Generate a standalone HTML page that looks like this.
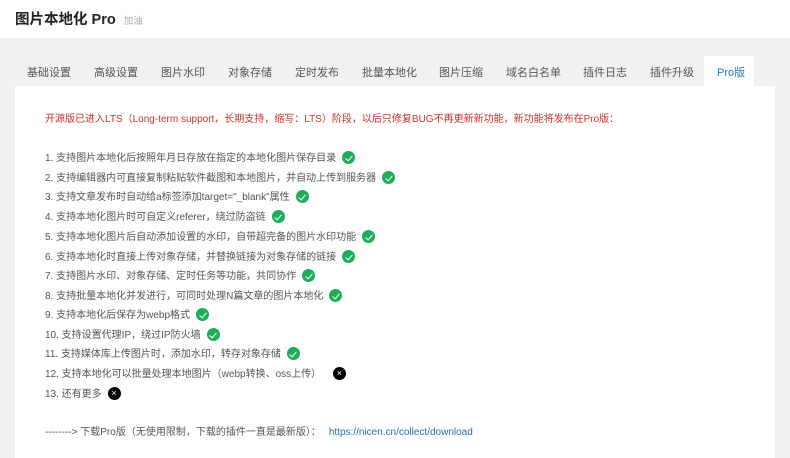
<!DOCTYPE html><html><head><meta charset="utf-8"><style>
body{margin:0;width:790px;height:458px;background:#f1f1f1;font-family:"Liberation Sans","Noto Sans CJK SC",sans-serif;overflow:hidden;position:relative}
.hd{position:absolute;left:0;top:0;width:790px;height:38px;background:#fff}
.t{position:absolute;left:15px;top:8px;font-size:14.5px;font-weight:bold;color:#222}
.t span{font-size:9.5px;font-weight:normal;color:#aaa;margin-left:8px}
.tab{position:absolute;top:64px;font-size:11px;color:#555;white-space:nowrap}
.act{position:absolute;left:704px;top:56px;width:50px;height:30px;background:#fff}
.pn{position:absolute;left:15px;top:86px;width:760px;height:372px;background:#fff}
.l{position:absolute;left:45px;font-size:10px;color:#555;white-space:nowrap;line-height:14px}
.ok,.no{display:inline-block;width:13px;height:13px;border-radius:50%;vertical-align:-3px;margin-left:6px;position:relative}
.ok{background:#1fad5c}.no{background:#000}
.ok:after{content:"";position:absolute;left:4.5px;top:2.5px;width:3px;height:6px;border:solid #fff;border-width:0 1.5px 1.5px 0;transform:rotate(40deg)}
.no:after{content:"×";position:absolute;left:3.5px;top:-1px;color:#fff;font-size:9px}
</style></head><body>
<div class="hd"><div class="t">图片本地化 Pro<span>加油</span></div></div>
<div class="act"></div>
<div class="tab" style="left:27px">基础设置</div>
<div class="tab" style="left:94px">高级设置</div>
<div class="tab" style="left:161px">图片水印</div>
<div class="tab" style="left:228px">对象存储</div>
<div class="tab" style="left:295px">定时发布</div>
<div class="tab" style="left:362px">批量本地化</div>
<div class="tab" style="left:439px">图片压缩</div>
<div class="tab" style="left:506px">域名白名单</div>
<div class="tab" style="left:583px">插件日志</div>
<div class="tab" style="left:650px">插件升级</div>
<div class="tab" style="left:717px;color:#2a7ac0">Pro版</div>
<div class="pn"></div>
<div class="l" style="top:113px;color:#c8322c">开源版已进入LTS（Long-term support，长期支持，缩写：LTS）阶段，以后只修复BUG不再更新新功能，新功能将发布在Pro版：</div>
<div class="l" style="top:151px">1. 支持图片本地化后按照年月日存放在指定的本地化图片保存目录<i class="ok"></i></div>
<div class="l" style="top:171px">2. 支持编辑器内可直接复制粘贴软件截图和本地图片，并自动上传到服务器<i class="ok"></i></div>
<div class="l" style="top:190px">3. 支持文章发布时自动给a标签添加target="_blank"属性<i class="ok"></i></div>
<div class="l" style="top:210px">4. 支持本地化图片时可自定义referer，绕过防盗链<i class="ok"></i></div>
<div class="l" style="top:230px">5. 支持本地化图片后自动添加设置的水印，自带超完备的图片水印功能<i class="ok"></i></div>
<div class="l" style="top:250px">6. 支持本地化时直接上传对象存储，并替换链接为对象存储的链接<i class="ok"></i></div>
<div class="l" style="top:269px">7. 支持图片水印、对象存储、定时任务等功能，共同协作<i class="ok"></i></div>
<div class="l" style="top:289px">8. 支持批量本地化并发进行，可同时处理N篇文章的图片本地化<i class="ok"></i></div>
<div class="l" style="top:308px">9. 支持本地化后保存为webp格式<i class="ok"></i></div>
<div class="l" style="top:328px">10. 支持设置代理IP，绕过IP防火墙<i class="ok"></i></div>
<div class="l" style="top:347px">11. 支持媒体库上传图片时，添加水印，转存对象存储<i class="ok"></i></div>
<div class="l" style="top:367px">12. 支持本地化可以批量处理本地图片（webp转换、oss上传）<i class="no" style="margin-left:12px"></i></div>
<div class="l" style="top:387px">13. 还有更多<i class="no"></i></div>
<div class="l" style="top:426px">--------&gt; 下载Pro版（无使用限制，下载的插件一直是最新版）：<span style="color:#2a6fb0;margin-left:8px">https://nicen.cn/collect/download</span></div>
</body></html>
